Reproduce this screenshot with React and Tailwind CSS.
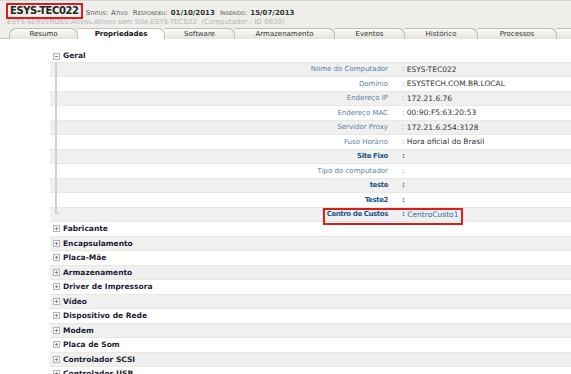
import React from 'react';

const rows = [
  { label: 'Nome do Computador', value: 'ESYS-TEC022' },
  { label: 'Domínio', value: 'ESYSTECH.COM.BR.LOCAL' },
  { label: 'Endereço IP', value: '172.21.6.76' },
  { label: 'Endereço MAC', value: '00:90:F5:63:20:53' },
  { label: 'Servidor Proxy', value: '172.21.6.254:3128' },
  { label: 'Fuso Horário', value: 'Hora oficial do Brasil' },
  { label: 'Site Fixo', value: '', bold: true },
  { label: 'Tipo do computador', value: '' },
  { label: 'teste', value: '', bold: true },
  { label: 'Teste2', value: '', bold: true },
  { label: 'Centro de Custos', value: 'CentroCusto1', bold: true, highlight: true },
];

const sections = [
  'Fabricante',
  'Encapsulamento',
  'Placa-Mãe',
  'Armazenamento',
  'Driver de Impressora',
  'Vídeo',
  'Dispositivo de Rede',
  'Modem',
  'Placa de Som',
  'Controlador SCSI',
  'Controlador USB',
];

const tabs = [
  { name: 'Resumo', w: 'w-[69px]' },
  { name: 'Propriedades', w: 'w-[87px]', active: true },
  { name: 'Software', w: 'w-[70px]' },
  { name: 'Armazenamento', w: 'w-[100px]' },
  { name: 'Eventos', w: 'w-[70px]' },
  { name: 'Histórico', w: 'w-[73px]' },
  { name: 'Processos', w: 'w-[79px]' },
  { name: '', w: 'w-[30px]' },
];

function Box({ minus }) {
  return (
    <svg width="7" height="7" viewBox="0 0 7 7" className="shrink-0">
      <rect x="0.5" y="0.5" width="6" height="6" fill="#f6f6f6" stroke="#b5b5b5" />
      <line x1="2" y1="3.5" x2="5" y2="3.5" stroke="#8a8a8a" />
      {!minus && <line x1="3.5" y1="2" x2="3.5" y2="5" stroke="#8a8a8a" />}
    </svg>
  );
}

function Sc({ children }) {
  return <span className="[font-variant:small-caps] text-[#555] text-[7px]">{children}</span>;
}

export default function App() {
  return (
    <div className="w-[571px] h-[374px] overflow-hidden bg-white font-['DejaVu_Sans',sans-serif]">
      {/* header */}
      <div className="h-[39px] bg-[#efeeea] border-t border-[#d6d6d0] flex flex-col">
        <div className="flex items-end pl-[6px] pt-[2px] h-[18px] relative z-10">
          <div className="border-2 border-[#e01b1b] h-[16px] px-[2px] flex items-center">
            <span className="text-[10px] font-bold tracking-[-0.4px] text-[#222] leading-none">ESYS-TEC022</span>
          </div>
          <div className="ml-[3px] mb-[2px] flex items-baseline gap-[3px] leading-none">
            <Sc>Status:</Sc>
            <Sc>Ativo</Sc>
            <Sc>&nbsp;Respondeu:</Sc>
            <span className="text-[7px] font-bold text-[#333]">01/10/2013</span>
            <Sc>&nbsp;Inserido:</Sc>
            <span className="text-[7px] font-bold text-[#333]">15/07/2013</span>
          </div>
        </div>
        <div className="pl-[7px] h-[8px] text-[7px] leading-[8px] text-[#b5b5b5] whitespace-nowrap -mt-[1px]">
          ESYS-SERVERDEV.Ativos.Ativos sem Site.ESYS-TEC022&nbsp; (Computador - ID 6630)
        </div>
        <div className="mt-auto flex pl-[9px] h-[11px] border-b border-[#c4c4bc]">
          {tabs.map((t, i) => (
            <div
              key={i}
              className={`${t.w} shrink-0 h-[11px] flex items-center justify-center text-[7px] leading-none whitespace-nowrap border-t border-r rounded-tr-[7px] ${
                i === 0 ? 'border-l rounded-tl-[7px]' : ''
              } ${
                t.active
                  ? 'bg-white border-[#c4c4bc] font-bold text-[#111] h-[12px] -mb-[1px]'
                  : 'bg-linear-to-b from-[#fbfbf9] to-[#e4e4dd] border-[#bcbcb4] text-[#333]'
              }`}
            >
              {t.name}
            </div>
          ))}
        </div>
      </div>

      {/* content */}
      <div className="pl-[50px] pt-[11px]">
        <div className="h-[12px] flex items-center">
          <div className="w-[3px]" />
          <Box minus />
          <span className="ml-[3px] text-[7.5px] font-bold text-[#1b1b33] leading-none">Geral</span>
        </div>
        {rows.map((r, i) => {
          const last = i === rows.length - 1;
          return (
            <div
              key={r.label}
              className={`relative flex h-[14.5px] items-stretch ${
                i % 2 === 0 ? 'bg-[#f0f0f0] border-y border-[#ebe9de]' : 'bg-white'
              }`}
            >
              <div className="w-[5px] shrink-0" />
              {last ? (
                <div className="w-[4px] h-[7px] border-l-2 border-b border-[#d0d0d0] shrink-0 -mt-[1px]" />
              ) : (
                <div className="w-[2px] bg-[#d0d0d0] shrink-0 -my-[1px]" />
              )}
              <div
                className={`${last ? 'w-[329px]' : 'w-[331px]'} shrink-0 text-right text-[7px] flex items-center justify-end whitespace-nowrap ${
                  r.bold ? 'font-bold text-[#22558a] tracking-[-0.4px]' : 'text-[#5a7ea6]'
                }`}
              >
                {r.label}
              </div>
              <div
                className={`pl-[14px] text-[7.5px] flex items-center whitespace-nowrap ${
                  r.highlight ? 'text-[#2f6aa6]' : 'text-[#333]'
                }`}
              >
                <span className={r.bold ? 'font-bold text-[#22558a] text-[7px]' : 'text-[#666] text-[7px]'}>:</span>
                <span>&nbsp;{r.value}</span>
              </div>
              {r.highlight && (
                <div className="absolute left-[273px] top-[0px] w-[140px] h-[17px] border-2 border-[#e01b1b] z-10" />
              )}
            </div>
          );
        })}
        {sections.map((s, j) => {
          const i = rows.length + j;
          return (
            <div
              key={s}
              className={`flex h-[14.5px] items-center ${
                i % 2 === 0 ? 'bg-[#f0f0f0] border-y border-[#ebe9de]' : 'bg-white'
              }`}
            >
              <div className="w-[3px]" />
              <Box />
              <span className="ml-[3px] text-[7.5px] font-bold text-[#1b1b33] leading-none whitespace-nowrap">{s}</span>
            </div>
          );
        })}
      </div>
    </div>
  );
}
